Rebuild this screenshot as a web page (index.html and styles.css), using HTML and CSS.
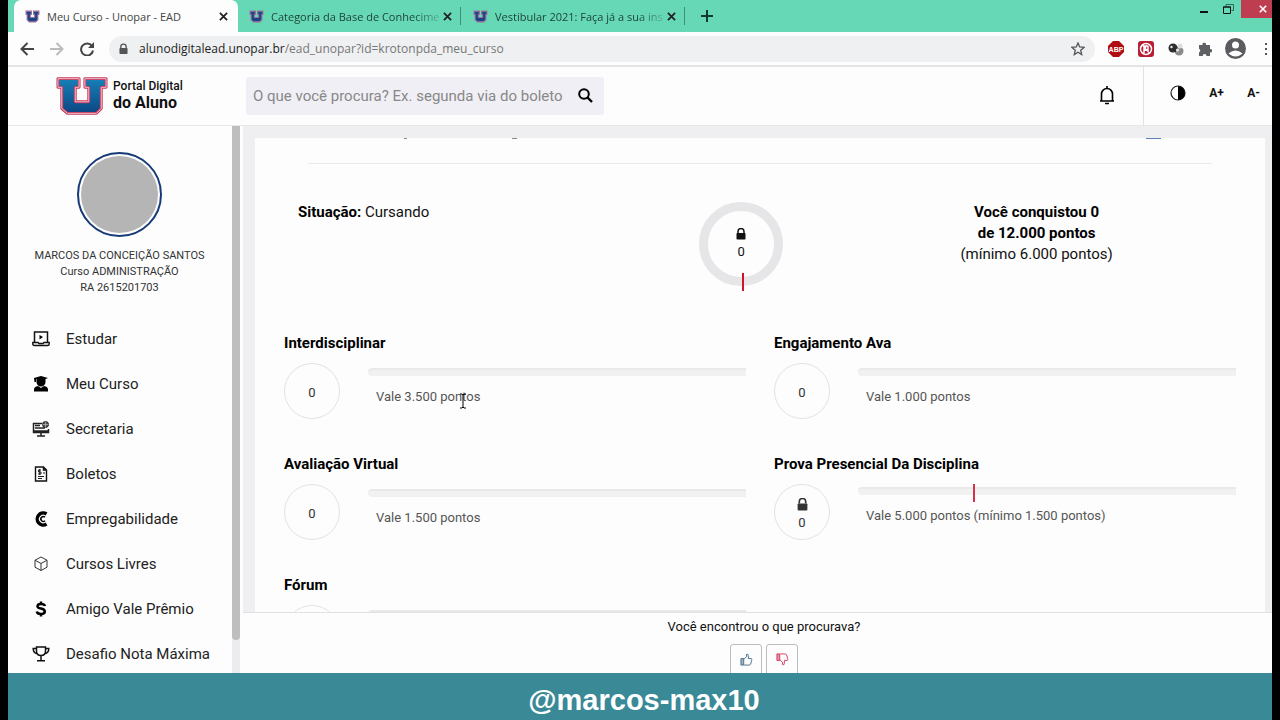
FILE: index.html
```html
<!DOCTYPE html>
<html lang="pt-BR">
<head>
<meta charset="utf-8">
<title>Meu Curso - Unopar - EAD</title>
<link rel="stylesheet" href="styles.css">
</head>
<body>
<svg class="defs" width="0" height="0" aria-hidden="true">
  <defs>
    <linearGradient id="blue" x1="0" y1="0" x2="0" y2="1"><stop offset="0" stop-color="#1680b8"/><stop offset="1" stop-color="#0c4683"/></linearGradient>
    <symbol id="u-logo" viewBox="0 0 54 40">
      <path d="M2 2h22v9h-4v15h14V11h-4V2h22v9h-5v22l-5 5H12l-6-5V11H2z" fill="url(#blue)" stroke="#c5385a" stroke-width="3" stroke-linejoin="round"/>
      <path d="M2 2h22v9h-4v15h14V11h-4V2h22v9h-5v22l-5 5H12l-6-5V11H2z" fill="none" stroke="#f0c4d2" stroke-width="1" stroke-linejoin="round"/>
    </symbol>
    <symbol id="u-small" viewBox="0 0 14 12"><path d="M1 1h5v3H5v3h4V4H8V1h5v3h-1v5l-2 2H4L2 9V4H1z" fill="#17448a" stroke="#a06e94"/></symbol>
    <symbol id="x" viewBox="0 0 10 10"><path d="M1 1l8 8M9 1L1 9" fill="none" stroke="currentColor" stroke-width="2"/></symbol>
    <symbol id="lock" viewBox="0 0 10 12"><path d="M2 5V3.500a3 3 0 0 1 6 0V5" fill="none" stroke="currentColor" stroke-width="1.500"/><rect x="0.500" y="5" width="9" height="6.500" rx="0.800" fill="currentColor"/></symbol>
    <symbol id="thumb" viewBox="0 0 14 14"><path d="M1 6h3v7H1z" fill="currentColor" fill-opacity="0.500" stroke="currentColor"/><path d="M4 7l3-3V1.500q2-1 2 1.500v3h3q1.500.5.5 2l-1 4q-.5 1-2 1H4.500" fill="none" stroke="currentColor"/></symbol>
  </defs>
</svg>

<div class="browser">
  <div class="tabs">
    <div class="tab tab-active"><svg class="fav"><use href="#u-small"/></svg><span class="tab-name">Meu Curso - Unopar - EAD</span><button class="close" aria-label="Fechar guia"><svg width="9" height="9"><use href="#x"/></svg></button></div>
    <div class="tab"><svg class="fav"><use href="#u-small"/></svg><span class="tab-name fade">Categoria da Base de Conhecime</span><button class="close" aria-label="Fechar guia"><svg width="9" height="9"><use href="#x"/></svg></button></div>
    <div class="tab"><svg class="fav"><use href="#u-small"/></svg><span class="tab-name fade">Vestibular 2021: Faça já a sua ins</span><button class="close" aria-label="Fechar guia"><svg width="9" height="9"><use href="#x"/></svg></button></div>
    <button class="new-tab" aria-label="Nova guia"><svg width="12" height="12" viewBox="0 0 12 12"><path d="M6 0v12M0 6h12" stroke="#14382c" stroke-width="2"/></svg></button>
    <div class="window-buttons">
      <button class="win" aria-label="Minimizar"><svg width="10" height="10" viewBox="0 0 10 10"><path d="M1 8h8" stroke="#111" stroke-width="2"/></svg></button>
      <button class="win" aria-label="Restaurar"><svg width="11" height="10" viewBox="0 0 11 10"><path d="M3 2.500V.5h7.500v6H8.500" fill="none" stroke="#2a6b57"/><path d="M.5 3h7v6.500h-7zM0 3h8" fill="none" stroke="#111"/></svg></button>
      <button class="win win-close" aria-label="Fechar"><svg width="8" height="8"><use href="#x"/></svg></button>
    </div>
  </div>

  <div class="toolbar">
    <button class="nav" aria-label="Voltar"><svg width="14" height="14" viewBox="0 0 14 14"><path d="M14 7H1.500M7.500 1l-6 6 6 6" fill="none" stroke="#444" stroke-width="2"/></svg></button>
    <button class="nav" aria-label="Avançar"><svg width="14" height="14" viewBox="0 0 14 14"><path d="M0 7h12.500M6.500 1l6 6-6 6" fill="none" stroke="#bbb" stroke-width="2"/></svg></button>
    <button class="nav" aria-label="Recarregar"><svg width="14" height="14" viewBox="0 0 14 14"><path d="M12 4a6 6 0 1 0 1 4.500" fill="none" stroke="#444" stroke-width="2"/><path d="M14 0v6H8z" fill="#444"/></svg></button>
    <div class="address">
      <svg class="address-lock" width="9" height="12"><use href="#lock"/></svg>
      <span class="url"><b>alunodigitalead.unopar.br</b>/ead_unopar?id=krotonpda_meu_curso</span>
      <svg width="14" height="14" viewBox="0 0 14 14"><path d="M7 1l1.700 4 4.300.4-3.300 2.800 1 4.300L7 10.200l-3.700 2.300 1-4.300L1 5.400 5.300 5z" fill="none" stroke="#555" stroke-width="1.300"/></svg>
    </div>
    <div class="extensions">
      <svg width="16" height="16" viewBox="0 0 16 16"><path d="M5 0h6l5 5v6l-5 5H5l-5-5V5z" fill="#b00d12"/><text x="8" y="11" class="abp">ABP</text></svg>
      <svg width="16" height="16" viewBox="0 0 16 16"><rect width="16" height="16" rx="3" fill="#b81d35"/><circle cx="8" cy="8" r="5.500" fill="none" stroke="#fff" stroke-width="1.500"/><path d="M6 12V5h1.500v5M8 4.500l2 1V11M4.500 4l7 8" stroke="#fff" fill="none" stroke-width="1.500"/></svg>
      <svg width="16" height="14" viewBox="0 0 16 14"><circle cx="11" cy="9" r="4.500" fill="#8b8b8b"/><circle cx="12" cy="4" r="2.500" fill="#ddd"/><circle cx="5" cy="6" r="4.500" fill="#2d2d2d"/><circle cx="3.500" cy="5" r="1.200" fill="#eee"/><circle cx="9.500" cy="8" r="1.500" fill="#eee"/></svg>
      <svg width="14" height="14" viewBox="0 0 14 14"><path d="M1 3h3.500a1.800 1.800 0 1 1 3.500 0h4v4a1.700 1.700 0 1 1 0 3.300V14H8.500a1.900 1.900 0 0 0-3.800 0H1v-3.700a1.900 1.900 0 0 0 0-3.600z" fill="#5f6063"/></svg>
      <svg class="user" width="21" height="21" viewBox="0 0 21 21"><circle cx="10.500" cy="10.500" r="10.500" fill="#5b5c60"/><circle cx="10.500" cy="7" r="3.500" fill="#fff"/><path d="M3.500 15.500q7-6 14 0-7 6-14 0" fill="#fff"/></svg>
      <svg width="4" height="14" viewBox="0 0 4 14"><path d="M1 1h2v2H1zM1 6h2v2H1zM1 11h2v2H1z" fill="#555"/></svg>
    </div>
  </div>

  <header class="header">
    <a class="brand" href="#"><svg width="52" height="40"><use href="#u-logo"/></svg><span class="brand-name">Portal Digital<strong>do Aluno</strong></span></a>
    <form class="search"><input type="text" aria-label="Buscar" placeholder="O que você procura? Ex. segunda via do boleto"><button type="button" aria-label="Pesquisar"><svg width="15" height="15" viewBox="0 0 15 15"><circle cx="6" cy="6" r="4.800" fill="none" stroke="#000" stroke-width="2"/><path d="M9.500 9.500l4.500 4.500" stroke="#000" stroke-width="2.400"/></svg></button></form>
    <button class="bell" aria-label="Notificações"><svg width="16" height="19" viewBox="0 0 16 19"><path d="M1 15h14M2.500 15V8a5.500 5.500 0 0 1 11 0v7M8 0v3M6 17.500h4" fill="none" stroke="#000" stroke-width="1.600"/></svg></button>
    <div class="access">
      <button aria-label="Contraste"><svg width="16" height="16" viewBox="0 0 16 16"><circle cx="8" cy="8" r="7" fill="#fff" stroke="#222" stroke-width="1.200"/><path d="M8 1a7 7 0 0 1 0 14z"/></svg></button>
      <button>A+</button>
      <button>A-</button>
    </div>
  </header>

  <div class="page">
    <aside class="sidebar">
      <div class="profile"><div class="avatar"></div><p>MARCOS DA CONCEIÇÃO SANTOS<br>Curso ADMINISTRAÇÃO<br>RA 2615201703</p></div>
      <nav class="menu">
        <a href="#"><svg viewBox="0 0 18 16"><path d="M2.500 11V1h13v10" fill="none" stroke="#111" stroke-width="1.500"/><path d="M7.500 4l3.500 2-3.500 2.500z"/><path d="M.8 11.500h5.200l1 1h4l1-1h5.200v1.500q0 1.500-1.500 1.500H2.300Q.8 14.500.8 13z" fill="none" stroke="#111" stroke-width="1.400"/></svg>Estudar</a>
        <a href="#"><svg viewBox="0 0 18 16"><path d="M2 2l7-2 7 2-2.500 1v3a4.500 4.500 0 0 1-9 0V3L4 2.800V6H2.500zM2 15.500v-2q0-3 4-3.500l3 2 3-2q4 .5 4 3.500v2z"/></svg>Meu Curso</a>
        <a href="#"><svg viewBox="0 0 18 16"><path d="M10 2.500H1.500v9h15V8M1 10h16" fill="none" stroke="#222" stroke-width="1.500"/><path d="M3 4.500h5M3 7h10M5 15h8M9 11v4" stroke="#222" stroke-width="1.500"/><circle cx="13.500" cy="3.500" r="3" fill="#555" stroke="#222"/><path d="M10.500 3.500h6M13.500.5v6" stroke="#ddd" stroke-width=".5"/></svg>Secretaria</a>
        <a href="#"><svg viewBox="0 0 18 16"><path d="M3.500 1h8l3 3v11h-11zM11.500 1v3h3" fill="none" stroke="#111" stroke-width="1.400"/><path d="M9 4H6.500v2H9v2H6M7.700 3v6M6 10.500h6M6 12.500h4M11 7h2" fill="none" stroke="#222"/></svg>Boletos</a>
        <a href="#"><svg viewBox="0 0 18 16"><path d="M14.500 3A6 6 0 1 0 14.500 13" fill="none" stroke="#000" stroke-width="3.400"/><path d="M13 6.300a2.400 2.400 0 1 0 0 3.400" fill="none" stroke="#000" stroke-width="1.500"/></svg>Empregabilidade</a>
        <a href="#"><svg viewBox="0 0 18 16"><path d="M9 1l6 3.200v7L9 14.500l-6-3.300v-7zM3 4.200l6 3.300 6-3.300M9 7.500v7" fill="none" stroke="#333"/></svg>Cursos Livres</a>
        <a href="#"><svg viewBox="0 0 18 16"><path d="M13 5Q12.500 3 9 3T5.500 5.200Q5.500 7 9 7.600t3.800 2.900Q12.800 13 9 13t-4.200-2.500M9 .5V3M9 13v2.500" fill="none" stroke="#000" stroke-width="2.500"/></svg>Amigo Vale Prêmio</a>
        <a href="#"><svg viewBox="0 0 18 16"><path d="M4.500 1h9v4q0 4.500-4.500 4.500T4.500 5zM4.500 2.500H1.200q0 4.500 4 5.200M13.500 2.500h3.300q0 4.500-4 5.200M9 9.500V14M5 14.700h8" fill="none" stroke="#111" stroke-width="1.500"/></svg>Desafio Nota Máxima</a>
      </nav>
    </aside>
    <div class="scrollbar"><div class="thumb"></div></div>
    <main class="main">
      <div class="scroll">
        <section class="card">
          <div class="card-head"><i class="mark"></i><i class="mark"></i><i class="link-mark"></i></div>
          <div class="summary">
            <p class="status"><b>Situação:</b> Cursando</p>
            <div class="total"><svg width="10" height="12"><use href="#lock"/></svg><span>0</span></div>
            <p class="points"><b>Você conquistou 0<br>de 12.000 pontos</b><br>(mínimo 6.000 pontos)</p>
          </div>
          <div class="activities">
            <article class="activity"><h2>Interdisciplinar</h2><div class="ring">0</div><div class="detail"><div class="bar"></div><p>Vale 3.500 pontos<svg class="cursor" width="8" height="16" viewBox="0 0 8 16"><path d="M1 1h2l1 1 1-1h2M4 2v12M1 15h2l1-1 1 1h2" fill="none" stroke="#000"/></svg></p></div></article>
            <article class="activity"><h2>Engajamento Ava</h2><div class="ring">0</div><div class="detail"><div class="bar"></div><p>Vale 1.000 pontos</p></div></article>
            <article class="activity"><h2>Avaliação Virtual</h2><div class="ring">0</div><div class="detail"><div class="bar"></div><p>Vale 1.500 pontos</p></div></article>
            <article class="activity"><h2>Prova Presencial Da Disciplina</h2><div class="ring"><svg width="11" height="13"><use href="#lock"/></svg><span>0</span></div><div class="detail detail-min"><div class="bar"><i style="left: 30.5%"></i></div><p>Vale 5.000 pontos (mínimo 1.500 pontos)</p></div></article>
            <article class="activity"><h2>Fórum</h2><div class="ring"></div><div class="detail"><div class="bar"></div></div></article>
          </div>
        </section>
      </div>
      <div class="feedback">
        <p>Você encontrou o que procurava?</p>
        <div class="votes"><button class="up" aria-label="Sim"><svg width="13" height="13"><use href="#thumb"/></svg></button><button class="down" aria-label="Não"><svg width="13" height="13"><use href="#thumb"/></svg></button></div>
      </div>
    </main>
  </div>
</div>
<footer class="banner">@marcos-max10</footer>
</body>
</html>
```
FILE: styles.css
```css
* { box-sizing: border-box; }
body {
  margin: 0;
  padding: 0 8px;
  height: 100vh;
  display: flex;
  flex-direction: column;
  overflow: hidden;
  background: #000;
  color: #111;
  font-family: Roboto, "Liberation Sans", sans-serif;
}
p, h2 { margin: 0; }
b, h2 { color: #000; }
button { border: 0; padding: 0; background: none; color: inherit; font: inherit; display: flex; align-items: center; justify-content: center; }
a { color: inherit; text-decoration: none; }
.defs { position: absolute; }
svg { flex: none; display: block; }

.browser { flex: 1; min-height: 0; display: flex; flex-direction: column; background: #fdfdfd; }

.tabs { flex: none; display: flex; height: 32px; padding-left: 6px; background: #67d8b5; font: 11px "Open Sans", sans-serif; color: #1d4538; }
.tab { display: flex; align-items: center; width: 224px; padding: 0 9px 0 11px; border-right: 1px solid transparent; background: linear-gradient(#3d8f78, #3d8f78) right center / 1px 18px no-repeat; }
.tab-active { background: #fdfdfd; border-radius: 7px 7px 0 0; color: #444; }
.fav { width: 15px; height: 13px; }
.tab-name { flex: 1; min-width: 0; margin: 0 4px 0 7px; white-space: nowrap; }
.fade { mask-image: linear-gradient(to right, #000 85%, rgba(0, 0, 0, 0.200)); }
.close { color: #222; }
.new-tab { width: 42px; }
.window-buttons { margin-left: auto; display: flex; height: 18px; }
.win { width: 25px; }
.win-close { width: 31px; padding-left: 12px; background: #bf3d50; color: #fff; }

.toolbar { flex: none; display: flex; align-items: center; height: 35px; padding-left: 4px; border-bottom: 2px solid #e4e4e7; }
.nav { width: 30px; }
.address { flex: 1; display: flex; align-items: center; height: 26px; margin-left: 7px; padding: 0 10px; border-radius: 13px; background: #eef0f1; font: 12px "Open Sans", sans-serif; color: #777; }
.address-lock { color: #555; }
.url { flex: 1; margin-left: 11px; }
.url b { font-weight: 400; color: #222; }
.extensions { display: flex; align-items: center; gap: 14px; padding: 0 4px 0 13px; }
.user { margin: 0 4px 0 -1px; }
.abp { font: bold 7px "Liberation Sans", sans-serif; fill: #fff; text-anchor: middle; }

.header { flex: none; display: flex; align-items: center; height: 59px; border-bottom: 1px solid #e8e8ea; }
.brand { display: flex; align-items: center; gap: 5px; width: 190px; margin-left: 48px; }
.brand-name { font-size: 12px; font-weight: 500; line-height: 16px; padding-bottom: 2px; }
.brand-name strong { display: block; font-size: 16px; line-height: 18px; }
.search { display: flex; width: 358px; height: 38px; border-radius: 3px; background: #f0eff5; }
.search input { flex: 1; min-width: 0; border: 0; padding: 0 0 0 7px; background: none; font: 15px Roboto, sans-serif; }
.search input::placeholder { color: #888; }
.search button { width: 38px; padding-bottom: 2px; }
.bell { margin-left: auto; width: 72px; padding-bottom: 2px; }
.access { display: flex; align-self: stretch; width: 129px; padding: 0 12px 6px 26px; justify-content: space-between; align-items: center; border-left: 1px solid #e2e2e6; font-size: 12px; font-weight: 700; }

.page { flex: 1; min-height: 0; display: flex; }
.sidebar { width: 224px; overflow: hidden; }
.profile { display: flex; flex-direction: column; align-items: center; padding: 26px 1px 0 0; font-size: 11px; line-height: 16px; text-align: center; color: #333; }
.profile p { margin-top: 11px; }
.avatar { width: 85px; height: 85px; padding: 2px; border: 2px solid #173a78; border-radius: 50%; background: #b5b5b5 content-box; }
.menu { padding: 20px 0 0 24px; }
.menu a { display: flex; align-items: center; gap: 16px; height: 45px; font-size: 15px; color: #222; }
.menu svg { width: 18px; height: 16px; }
.scrollbar { width: 8px; background: #ececee; }
.thumb { height: 94%; background: #bebebe; border-radius: 0 0 4px 4px; }
.main { flex: 1; min-width: 0; display: flex; flex-direction: column; margin-left: 3px; }
.scroll { flex: 1; min-height: 0; overflow: hidden; padding: 12px 7px 0 12px; background: #efeff2; }
.card { padding: 0 29px; background: #fdfdfd; }
.card-head { display: flex; height: 26px; margin: 0 24px; border-bottom: 1px solid #e9e9ec; }
.mark { width: 3px; height: 1px; margin-left: 96px; background: #888; }
.mark + .mark { width: 5px; margin-left: 105px; }
.link-mark { width: 15px; height: 1px; margin: 0 51px 0 auto; background: #5b7fbe; }
.summary { display: grid; grid-template-columns: 11fr 84px 12fr; align-items: start; padding-top: 38px; height: 166px; font-size: 15px; line-height: 21px; }
.status { padding-left: 14px; }
.points { padding-left: 54px; text-align: center; }
.total { position: relative; display: flex; flex-direction: column; align-items: center; justify-content: center; width: 84px; height: 84px; border: 9px solid #e6e6e8; border-radius: 50%; font-size: 13px; line-height: 16px; gap: 4px; }
.total::after { content: ""; position: absolute; bottom: -14px; left: 34px; width: 2px; height: 18px; background: #d5102c; }
.activities { display: grid; grid-template-columns: 1fr 1fr; column-gap: 28px; grid-auto-rows: 121px; }
.activity { display: grid; grid-template-columns: 56px 1fr; column-gap: 28px; align-content: start; }
.activity h2 { grid-column: 1 / -1; font-size: 15px; line-height: 26px; height: 33px; }
.ring { display: flex; flex-direction: column; align-items: center; justify-content: center; gap: 4px; width: 56px; height: 56px; padding-top: 3px; border: 1px solid #e2e2e4; border-radius: 50%; font-size: 13px; line-height: 15px; color: #333; }
.detail { padding-top: 5px; }
.detail-min { padding-top: 3px; }
.bar { position: relative; height: 8px; border-radius: 4px 0 0 4px; background: #f1f1f2; border-top: 2px solid #e9e9eb; }
.bar i { position: absolute; top: -5px; width: 2px; height: 18px; background: #d5304c; }
.detail p { position: relative; padding: 12px 0 0 8px; font-size: 13px; line-height: 18px; color: #555; }
.cursor { position: absolute; left: 91px; top: 17px; }
.feedback { flex: none; display: flex; flex-direction: column; align-items: center; gap: 9px; height: 61px; overflow: hidden; padding: 5px 0 0 13px; border-top: 1px solid #e1e1e3; font-size: 13px; line-height: 17px; }
.votes { display: flex; flex: none; gap: 4px; }
.votes button { width: 32px; height: 32px; padding-bottom: 2px; border: 1px solid #bcbcc2; border-radius: 3px; }
.votes .up { color: #456a8b; }
.votes .down { color: #d4345c; }
.down svg { transform: scaleY(-1); }
.banner { flex: none; display: flex; align-items: center; justify-content: center; height: 47px; padding: 7px 0 0 8px; background: #398997; color: #fff; font: bold 29px "Liberation Sans", sans-serif; }
```
